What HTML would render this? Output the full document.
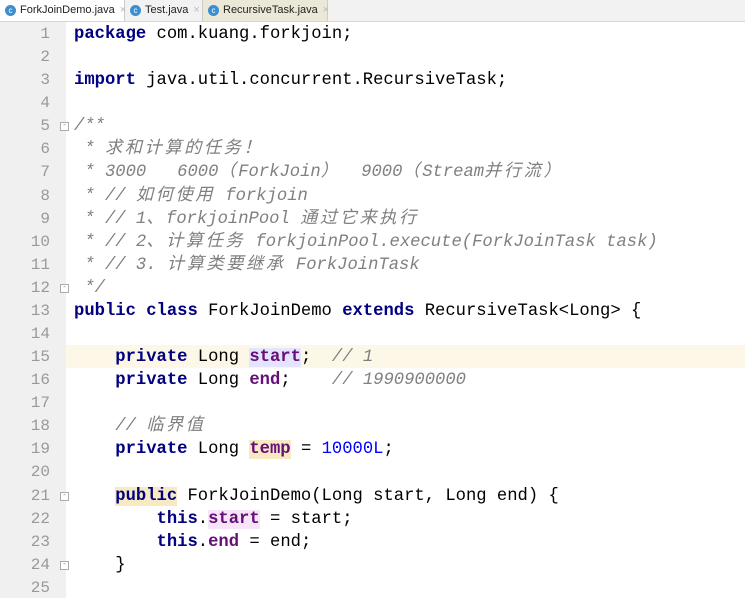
<!DOCTYPE html>
<html><head><meta charset="utf-8"><style>
body{margin:0;width:745px;height:598px;overflow:hidden;background:#fff;position:relative;font-family:"Liberation Mono","Noto Sans CJK SC",monospace;}
.tabs{position:absolute;left:0;top:0;width:745px;height:21px;background:#f2f2f2;border-bottom:1px solid #d6d6d6;font-family:"Liberation Sans",sans-serif;font-size:11px;}
.tab{position:absolute;top:0;height:21px;line-height:21px;color:#222;padding-left:20px;box-sizing:border-box;border-right:1px solid #ccc;}
.tab i{position:absolute;left:5px;top:5px;width:11px;height:11px;border-radius:50%;background:#3d8ecf;color:#fff;font-style:normal;font-size:8px;line-height:11px;text-align:center;}
.tab b{color:#bbb;font-weight:normal;margin-left:5px}
.gut{position:absolute;left:0;top:22px;width:66px;height:576px;background:#f0f0f0;}
.hl{position:absolute;left:66px;top:345px;width:679px;height:23px;background:#fcf7e6;}
.nums{position:absolute;left:0;top:23px;width:50px;text-align:right;color:#999;font-size:16px;line-height:23.08px;white-space:pre;}
.code{position:absolute;left:74px;top:23px;font-size:17.2px;line-height:23.08px;white-space:pre;color:#000;}
.k{color:#000080;font-weight:bold}
.cm{color:#808080;font-style:italic}
.f{color:#660e7a;font-weight:bold}
.n{color:#0000ff}
.c{letter-spacing:2.6px}
.fold{position:absolute;left:60px;width:9px;height:9px;border:1px solid #aaa;background:#fff;box-sizing:border-box;font-size:8px;line-height:6px;text-align:center;color:#888}
</style></head><body>
<div class="tabs">
<div class="tab" style="left:0;width:125px;background:#fff">ForkJoinDemo.java<b>×</b><i>c</i></div>
<div class="tab" style="left:125px;width:78px">Test.java<b>×</b><i>c</i></div>
<div class="tab" style="left:203px;width:125px;background:#ece8d8">RecursiveTask.java<b>×</b><i>c</i></div>
</div>
<div class="gut"></div>
<div class="hl"></div>
<div class="nums">1
2
3
4
5
6
7
8
9
10
11
12
13
14
15
16
17
18
19
20
21
22
23
24
25</div>
<div class="fold" style="top:122px">-</div>
<div class="fold" style="top:284px">-</div>
<div class="fold" style="top:492px">-</div>
<div class="fold" style="top:561px">-</div>
<div class="code"><span class="k">package</span> com.kuang.forkjoin;

<span class="k">import</span> java.util.concurrent.RecursiveTask;

<span class="cm">/**
 * <span class="c">求和计算的任务！</span>
 * 3000   6000<span class="c">（</span>ForkJoin<span class="c">）</span>  9000<span class="c">（</span>Stream<span class="c">并行流）</span>
 * // <span class="c">如何使用</span> forkjoin
 * // 1<span class="c">、</span>forkjoinPool <span class="c">通过它来执行</span>
 * // 2<span class="c">、计算任务</span> forkjoinPool.execute(ForkJoinTask task)
 * // 3. <span class="c">计算类要继承</span> ForkJoinTask
 */</span>
<span class="k">public class</span> ForkJoinDemo <span class="k">extends</span> RecursiveTask&lt;Long&gt; {

    <span class="k">private</span> Long <span class="f" style="background:#e4e4ff">start</span>;  <span class="cm">// 1</span>
    <span class="k">private</span> Long <span class="f">end</span>;    <span class="cm">// 1990900000</span>

    <span class="cm">// <span class="c">临界值</span></span>
    <span class="k">private</span> Long <span class="f" style="background:#f7e9c2">temp</span> = <span class="n">10000L</span>;

    <span class="k" style="background:#f7e9c2">public</span> ForkJoinDemo(Long start, Long end) {
        <span class="k">this</span>.<span class="f" style="background:#f8e4f8">start</span> = start;
        <span class="k">this</span>.<span class="f">end</span> = end;
    }
</div>
</body></html>
